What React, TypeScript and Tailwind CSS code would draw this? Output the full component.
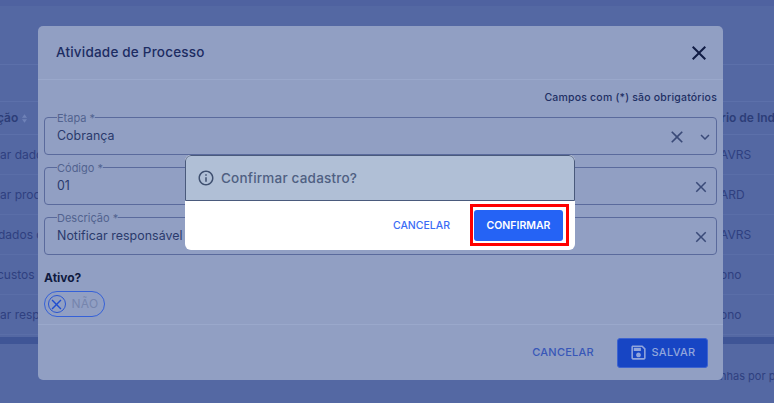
import React from "react";

const font = { fontFamily: "Inter, sans-serif" };

const rows = [
  { left: "ar dados", right: "AVRS", shift: "" },
  { left: "ar proc", right: "ARD", shift: "" },
  { left: "dados c", right: "AVRS", shift: "-ml-[2px]" },
  { left: "custos", right: "ono", shift: "-ml-[3px]" },
  { left: "ar resp", right: "ono", shift: "" },
];

// paths dos icones do Material
const CLOSE = "M19 6.41 17.59 5 12 10.59 6.41 5 5 6.41 10.59 12 5 17.59 6.41 19 12 13.41 17.59 19 19 17.59 13.41 12z";
const EXPAND = "M16.59 8.59 12 13.17 7.41 8.59 6 10l6 6 6-6z";
const INFO =
  "M11 7h2v2h-2zm0 4h2v6h-2zm1-9C6.48 2 2 6.48 2 12s4.48 10 10 10 10-4.48 10-10S17.52 2 12 2zm0 18c-4.41 0-8-3.59-8-8s3.59-8 8-8 8 3.59 8 8-3.59 8-8 8z";
const SAVE =
  "M17 3H5c-1.11 0-2 .9-2 2v14c0 1.1.89 2 2 2h14c1.1 0 2-.9 2-2V7l-4-4zm2 16H5V5h11.17L19 7.83V19zm-7-7c-1.66 0-3 1.34-3 3s1.34 3 3 3 3-1.34 3-3-1.34-3-3-3zM6 6h9v4H6z";

const Icon = ({ d, className }: { d: string; className?: string }) => (
  <svg viewBox="0 0 24 24" fill="currentColor" className={`shrink-0 ${className ?? ""}`}>
    <path d={d} />
  </svg>
);

const Field = ({
  label,
  value,
  select,
  className,
}: {
  label: string;
  value: string;
  select?: boolean;
  className?: string;
}) => (
  <fieldset
    className={`flex h-[42px] items-center rounded-[4px] border border-[#5a6a9c] pl-[12px] pr-[6px] ${className ?? ""}`}
  >
    <legend className="px-0 text-[11px] leading-[8px] text-[#52638f]">
      <span className="relative top-[1px]">{label}</span>
    </legend>
    <span className="mt-[-2px] flex-1 text-[12.4px] tracking-[0.05px] text-[#2a3a6c]">{value}</span>
    {select ? (
      <>
        <Icon d={CLOSE} className="mr-[9px] mt-[-2px] size-[20px] text-[#3a4a78]" />
        <Icon d={EXPAND} className="mr-[-4px] mt-[-2px] size-[18px] text-[#3a4a78]" />
      </>
    ) : (
      <Icon d={CLOSE} className="mt-[-2px] size-[18px] text-[#3a4a78]" />
    )}
  </fieldset>
);

const App = () => {
  return (
    <div className="relative h-[403px] w-[774px] overflow-hidden bg-[#5468a3]" style={font}>
      {/* pagina atras do modal */}
      <div className="h-[6px] bg-[#4f62a0]" />
      <div className="h-[59px] border-b border-[#5c70aa]" />
      <div className="mt-[36px] flex h-[34px] items-center justify-between border-y border-[#5c70aa] text-[12px] font-semibold text-[#2c3d78]">
        <span className="-ml-[3px] flex items-center">
          ção
          <svg viewBox="0 0 6 10" className="ml-[4px] h-[9px] w-[5px] fill-[#6f82b8]">
            <path d="M3 0 6 4H0zM3 10 0 6h6z" />
          </svg>
        </span>
        <span className="w-[53px] overflow-hidden whitespace-nowrap">rio de Indicador</span>
      </div>
      {rows.map((r) => (
        <div
          key={r.left}
          className="flex h-[40px] items-center justify-between border-b border-[#5a6ea8] text-[12px] text-[#2f4080]"
        >
          <span className={`whitespace-nowrap ${r.shift}`}>{r.left}</span>
          <span className="w-[54px] whitespace-nowrap">{r.right}</span>
        </div>
      ))}
      <div className="mt-[2px] h-[7px] bg-[#3f5596]" />
      <div className="mt-[24px] flex justify-end overflow-hidden whitespace-nowrap text-[11px] text-[#2f4080]">
        <span className="w-[54px]">nhas por página</span>
      </div>

      {/* modal */}
      <div className="absolute left-[38px] top-[26px] flex h-[354px] w-[685px] flex-col rounded-[5px] bg-[#919fc3]">
        <div className="flex h-[54px] items-center justify-between border-b border-[#9aa8cb] pl-[18px] pr-[12px]">
          <span className="text-[13.5px] font-medium tracking-[0.2px] text-[#1c2c62]">Atividade de Processo</span>
          <Icon d={CLOSE} className="size-[24px] text-[#111c44]" />
        </div>
        <div className="flex-1 px-[6px]">
          <p className="mt-[11px] text-right text-[10.5px] font-medium leading-[14px] tracking-[0.2px] text-[#1f2f63]">
            Campos com (*) são obrigatórios
          </p>
          <Field label="Etapa *" value="Cobrança" select className="mt-[8px]" />
          <Field label="Código *" value="01" className="mt-[8px]" />
          <Field label="Descrição *" value="Notificar responsável" className="mt-[8px]" />
          <p className="mt-[15px] text-[12px] font-bold leading-[16px] text-[#0f1a40]">Ativo?</p>
          <div className="mt-[5px] flex h-[26px] w-[61px] items-center rounded-full border-[1.5px] border-[#3561d8] pl-[2.5px]">
            <span className="flex size-[18px] items-center justify-center rounded-full border border-[#2a55d0]">
              <Icon d={CLOSE} className="size-[17px] text-[#1f4dd0]" />
            </span>
            <span className="ml-[6px] text-[12px] tracking-[0.3px] text-[#7685ad]">NÃO</span>
          </div>
        </div>
        <div className="flex h-[56px] items-center justify-end border-t border-[#9aa8cb] pr-[15px]">
          <span className="mr-[23px] text-[11px] font-medium tracking-[0.25px] text-[#3857b8]">CANCELAR</span>
          <button className="flex h-[30px] w-[91px] items-center justify-center gap-[3px] rounded-[3px] border border-[#3d63d0] bg-[#1745c4] text-[11px] font-medium tracking-[0.3px] text-[#91a5dc]">
            <Icon d={SAVE} className="size-[19px]" />
            SALVAR
          </button>
        </div>
      </div>

      {/* confirmacao */}
      <div className="absolute left-[185px] top-[155px] h-[95px] w-[390px] overflow-hidden rounded-[6px] bg-white">
        <div className="flex h-[46px] items-center rounded-t-[6px] border-[1.5px] border-[#4a5a7c] bg-[#b0bfd6] pl-[11px]">
          <Icon d={INFO} className="size-[18px] text-[#3f5070]" />
          <span className="ml-[6px] text-[13.5px] font-medium tracking-[0.2px] text-[#4f6082]">Confirmar cadastro?</span>
        </div>
        <div className="flex h-[48px] items-center justify-end pr-[6px]">
          <span className="mr-[20px] mt-[2px] text-[10.5px] font-medium text-[#3b6cf5]">CANCELAR</span>
          <div className="border-[3px] border-[#ff0000] pb-[2px] pl-[1px] pr-[3px] pt-[3px]">
            <button className="flex h-[31px] w-[89px] items-center justify-center rounded-[3px] bg-[#2563f5] pt-[1px] text-[10.5px] font-semibold text-white">
              CONFIRMAR
            </button>
          </div>
        </div>
      </div>
    </div>
  );
};

export default App;
